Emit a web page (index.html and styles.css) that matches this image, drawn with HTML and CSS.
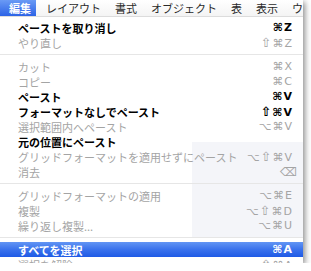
FILE: index.html
```html
<!DOCTYPE html>
<html lang="ja">
<head>
  <meta charset="UTF-8">
  <title>編集メニュー</title>
  <link rel="stylesheet" href="styles.css">
</head>
<body>
  <div class="shot">
    <div class="menubar">
      <span class="menubar-item active">編集</span>
      <span class="menubar-item">レイアウト</span>
      <span class="menubar-item">書式</span>
      <span class="menubar-item">オブジェクト</span>
      <span class="menubar-item">表</span>
      <span class="menubar-item">表示</span>
      <span class="menubar-item">ウィンドウ</span>
    </div>

    <ul class="menu">
      <li class="item"><span class="label">ペーストを取り消し</span><span class="key">⌘Z</span></li>
      <li class="item disabled"><span class="label">やり直し</span><span class="key"><span class="shift">⇧</span>⌘Z</span></li>
      <li class="sep"></li>
      <li class="item disabled"><span class="label">カット</span><span class="key">⌘X</span></li>
      <li class="item disabled"><span class="label">コピー</span><span class="key">⌘C</span></li>
      <li class="item"><span class="label">ペースト</span><span class="key">⌘V</span></li>
      <li class="item"><span class="label">フォーマットなしでペースト</span><span class="key"><span class="shift">⇧</span>⌘V</span></li>
      <li class="item disabled"><span class="label">選択範囲内へペースト</span><span class="key">⌥⌘V</span></li>
      <li class="item"><span class="label">元の位置にペースト</span><span class="key"></span></li>
      <li class="item disabled"><span class="label">グリッドフォーマットを適用せずにペースト</span><span class="key">⌥<span class="shift">⇧</span>⌘V</span></li>
      <li class="item disabled"><span class="label">消去</span><span class="key erase">⌫</span></li>
      <li class="sep"></li>
      <li class="item disabled"><span class="label">グリッドフォーマットの適用</span><span class="key">⌥⌘E</span></li>
      <li class="item disabled"><span class="label">複製</span><span class="key">⌥<span class="shift">⇧</span>⌘D</span></li>
      <li class="item disabled"><span class="label">繰り返し複製...</span><span class="key">⌥⌘U</span></li>
      <li class="sep"></li>
      <li class="item selected"><span class="label">すべてを選択</span><span class="key">⌘A</span></li>
      <li class="item disabled"><span class="label">選択を解除</span><span class="key"><span class="shift">⇧</span>⌘A</span></li>
    </ul>
  </div>
</body>
</html>
```

FILE: styles.css
```css
* {
  margin: 0;
  padding: 0;
  box-sizing: border-box;
}

body {
  background: white;
  font-family: "Noto Sans CJK JP", "DejaVu Sans", sans-serif;
  font-size: 11px;
}

/* cropped screenshot with a drop shadow on the right and bottom */
.shot {
  width: 303px;
  height: 263px;
  overflow: hidden;
  background: white;
  box-shadow: 2px 2px 6px rgba(0, 0, 0, 0.45);
}

.menubar {
  display: flex;
  height: 17px;
  background: linear-gradient(#ffffff, #f4f4f4);
  border-bottom: 1px solid #dcdcdc;
  white-space: nowrap;
}

.menubar-item {
  padding: 0 7px;
  line-height: 16px;
  color: #2a2a2a;
}

.menubar-item.active {
  padding: 0 5px 0 9px;
  margin-right: 3px;
  color: white;
  font-weight: bold;
  background: linear-gradient(#6a9af5, #2c63e6);
}

.menu {
  list-style: none;
  padding-top: 3px;
  background:
    linear-gradient(#f4f5f9, #f4f5f9) no-repeat 192px 125px / 111px 96px,
    white;
}

.item {
  display: flex;
  justify-content: space-between;
  align-items: center;
  height: 15px;
  padding: 0 10px 0 18px;
  color: #000;
  font-weight: bold;
  white-space: nowrap;
}

.item.disabled {
  color: #a4a4a4;
  font-weight: normal;
}

.item.selected {
  color: white;
  background: linear-gradient(#6295f4 0%, #3a72ec 50%, #1f5ae6 100%);
}

.key {
  font-family: "DejaVu Sans", "Liberation Sans", sans-serif;
  font-size: 11px;
  letter-spacing: 1px;
}

.shift {
  font-size: 13px;
  line-height: 1;
}

.key.erase {
  font-size: 12px;
  margin-right: -5px;
}

.sep {
  height: 1px;
  margin: 4px 0;
  background: #e6e6e6;
}
```
